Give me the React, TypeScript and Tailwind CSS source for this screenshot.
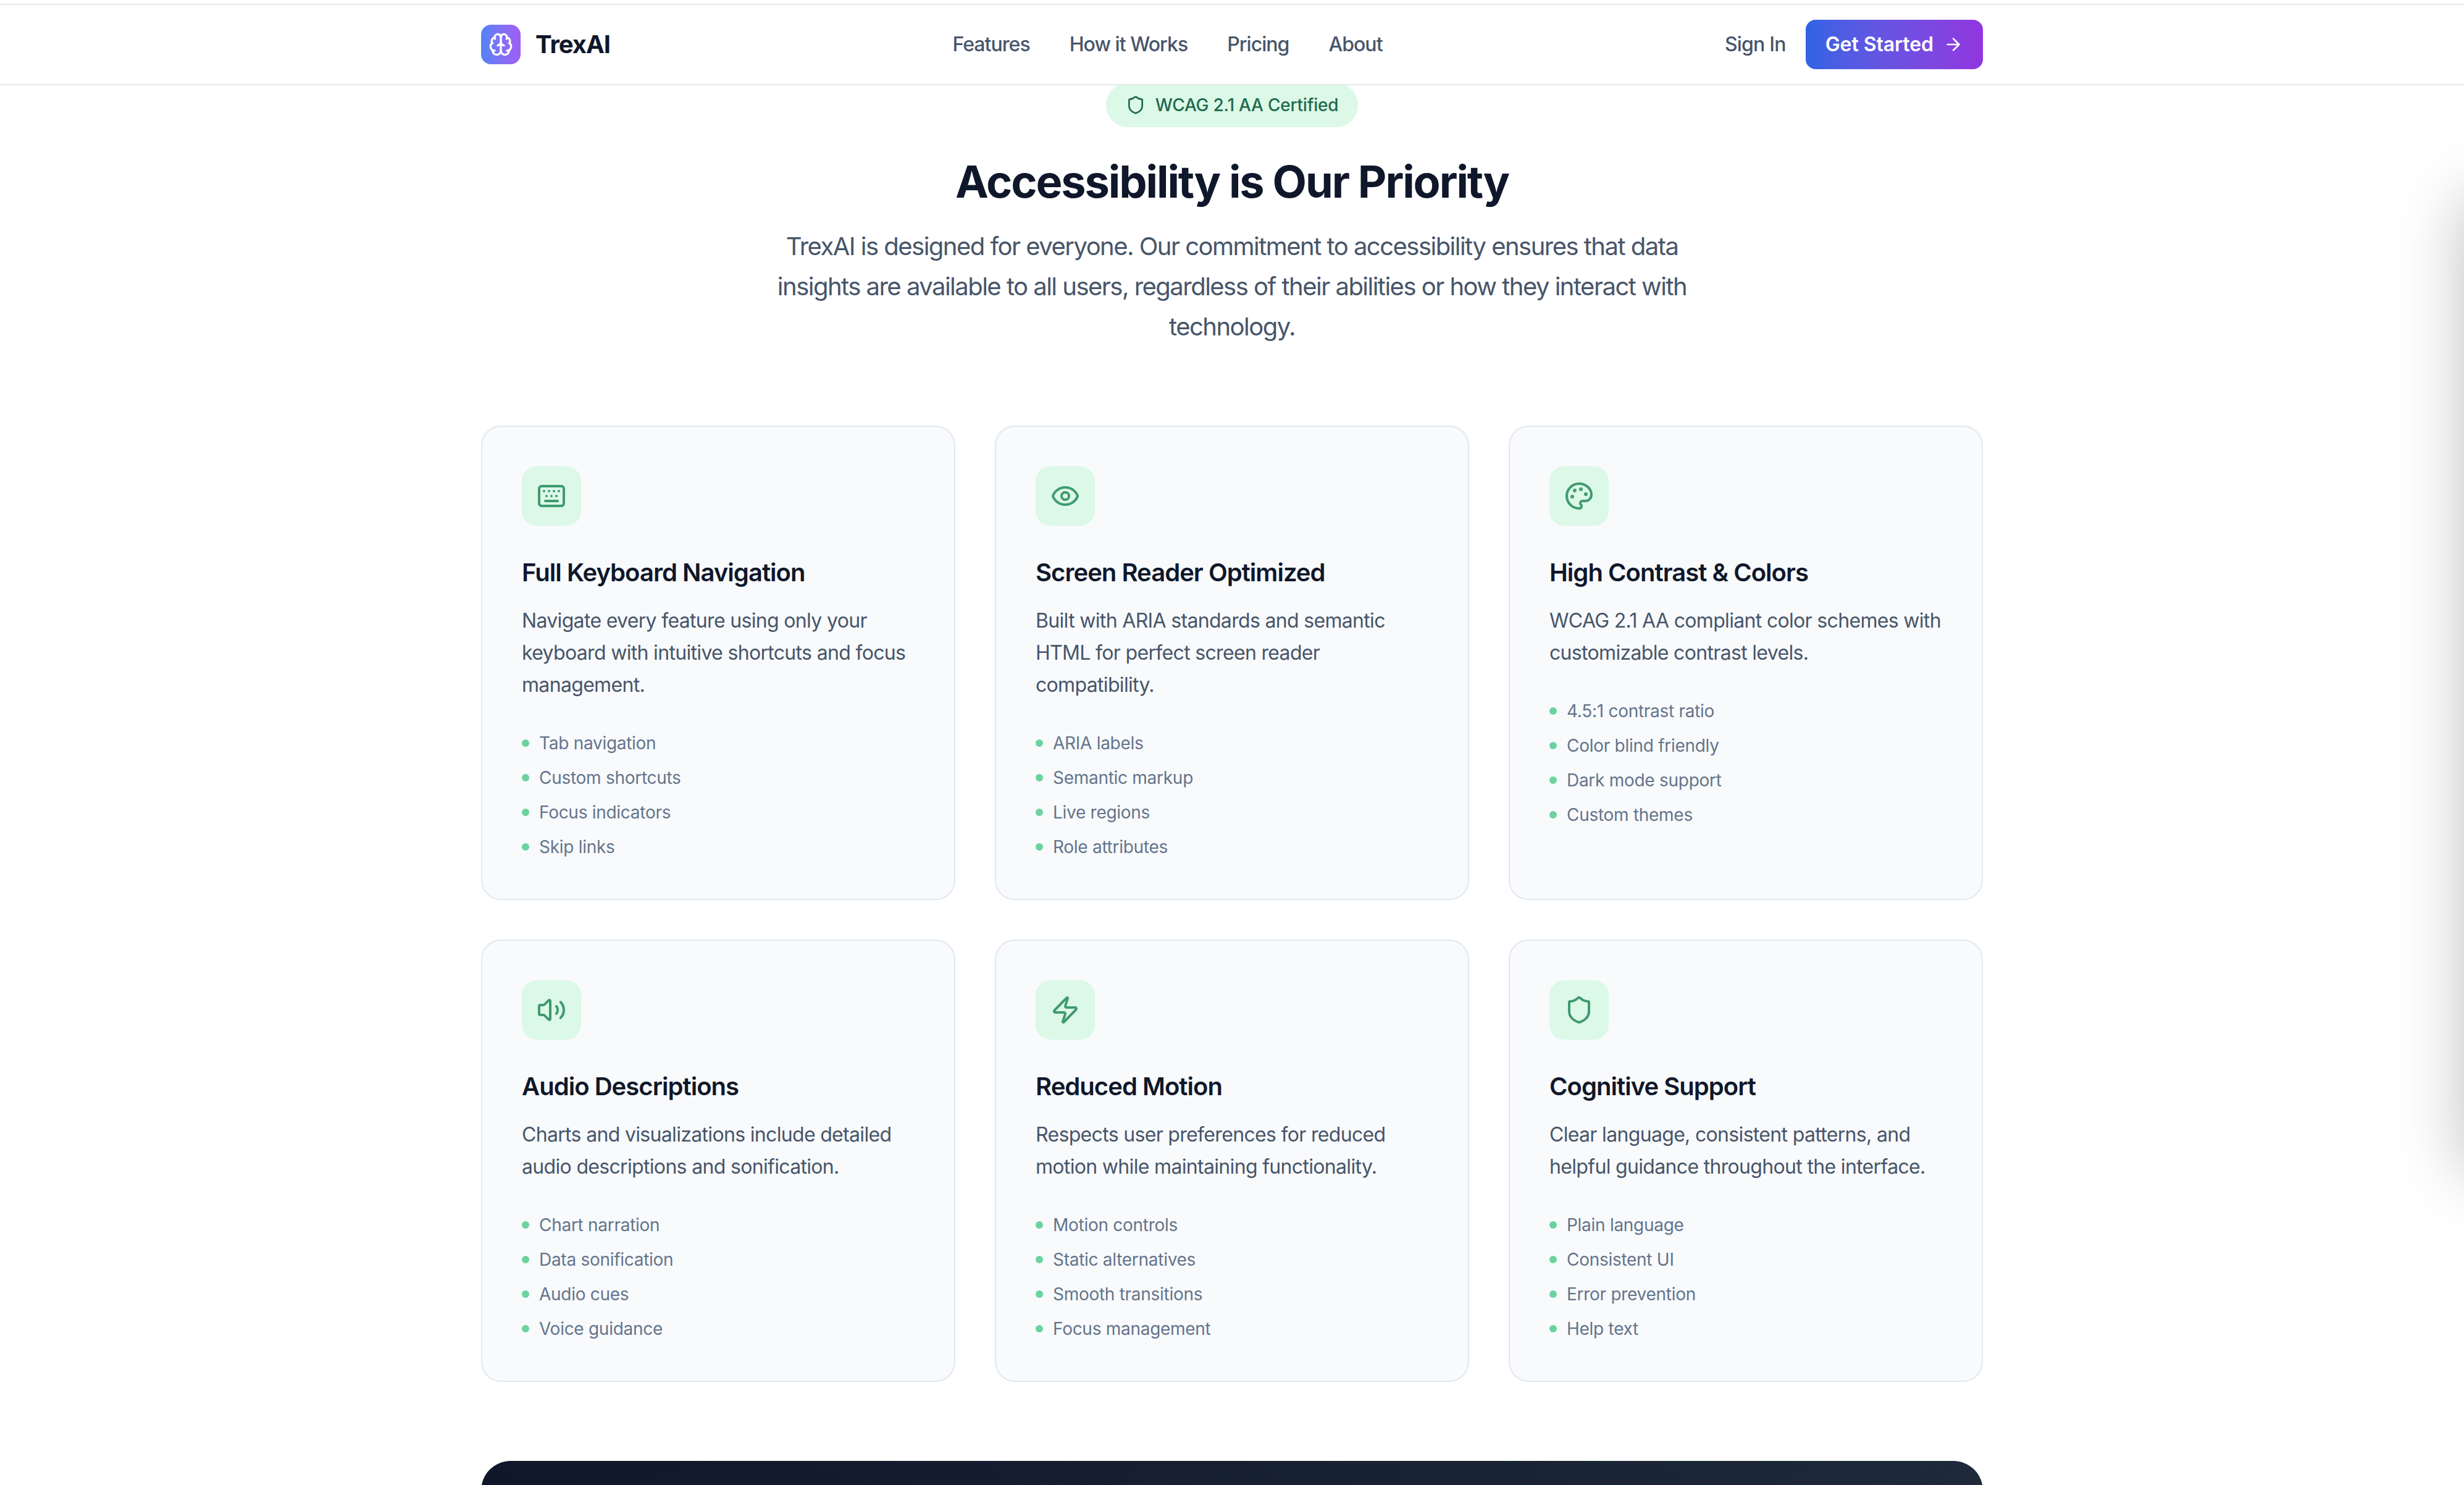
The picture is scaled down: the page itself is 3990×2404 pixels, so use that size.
import React from 'react';
import { ArrowRight, Brain, Eye, Keyboard, Palette, Shield, Volume2, Zap } from 'lucide-react';

const cards = [
  {
    icon: Keyboard,
    title: 'Full Keyboard Navigation',
    text: 'Navigate every feature using only your keyboard with intuitive shortcuts and focus management.',
    items: ['Tab navigation', 'Custom shortcuts', 'Focus indicators', 'Skip links'],
  },
  {
    icon: Eye,
    title: 'Screen Reader Optimized',
    text: 'Built with ARIA standards and semantic HTML for perfect screen reader compatibility.',
    items: ['ARIA labels', 'Semantic markup', 'Live regions', 'Role attributes'],
  },
  {
    icon: Palette,
    title: 'High Contrast & Colors',
    text: 'WCAG 2.1 AA compliant color schemes with customizable contrast levels.',
    items: ['4.5:1 contrast ratio', 'Color blind friendly', 'Dark mode support', 'Custom themes'],
  },
  {
    icon: Volume2,
    title: 'Audio Descriptions',
    text: 'Charts and visualizations include detailed audio descriptions and sonification.',
    items: ['Chart narration', 'Data sonification', 'Audio cues', 'Voice guidance'],
  },
  {
    icon: Zap,
    title: 'Reduced Motion',
    text: 'Respects user preferences for reduced motion while maintaining functionality.',
    items: ['Motion controls', 'Static alternatives', 'Smooth transitions', 'Focus management'],
  },
  {
    icon: Shield,
    title: 'Cognitive Support',
    text: 'Clear language, consistent patterns, and helpful guidance throughout the interface.',
    items: ['Plain language', 'Consistent UI', 'Error prevention', 'Help text'],
  },
];

const navLinks = ['Features', 'How it Works', 'Pricing', 'About'];

const Navbar = () => (
  <div className="relative z-10 bg-white pt-[6px]">
    <div className="h-[2px] bg-[#e5e7eb]" />
    <nav className="border-b-2 border-[#e5e7eb] bg-white">
      <div className="mx-auto flex h-[128px] w-[2432px] items-center justify-between">
        <div className="flex items-center gap-[24px]">
          <div className="flex h-[64px] w-[64px] items-center justify-center rounded-[16px] bg-gradient-to-r from-[#4f83f7] to-[#a05cf3] text-white">
            <Brain size={40} />
          </div>
          <span className="text-[40px] font-bold tracking-tight text-[#0f172a]">TrexAI</span>
        </div>
        <div className="flex items-center gap-[64px]">
          {navLinks.map((link) => (
            <a key={link} className="text-[32px] font-medium tracking-[-0.03em] text-[#475569]">
              {link}
            </a>
          ))}
        </div>
        <div className="flex items-center gap-[32px]">
          <a className="text-[32px] font-medium tracking-[-0.025em] text-[#475569]">Sign In</a>
          <button className="flex h-[80px] items-center gap-[16px] rounded-[16px] bg-gradient-to-r from-[#2f63e4] to-[#9135e0] px-[32px] text-[32px] font-semibold tracking-[-0.002em] text-white">
            Get Started
            <ArrowRight size={32} />
          </button>
        </div>
      </div>
    </nav>
  </div>
);

const Card = ({ card }: { card: (typeof cards)[number] }) => {
  const Icon = card.icon;
  return (
    <div className="rounded-[32px] border-2 border-[#e2e8f0] bg-[#f8fafc] p-[64px]">
      <div className="mb-[48px] flex h-[96px] w-[96px] items-center justify-center rounded-[24px] bg-[#dcf8e7] text-[#3f9a6f]">
        <Icon size={48} />
      </div>
      <h3 className="mb-[24px] text-[40px] leading-[56px] font-semibold tracking-[-0.024em] text-[#0f172a]">{card.title}</h3>
      <p className="mb-[48px] text-[32px] leading-[52px] tracking-[-0.021em] text-[#475569]">{card.text}</p>
      <ul className="flex flex-col gap-[16px]">
        {card.items.map((item) => (
          <li key={item} className="flex items-center gap-[16px] text-[28px] leading-[40px] tracking-[-0.01em] text-[#64748b]">
            <span className="h-[12px] w-[12px] rounded-full bg-[#6ad39f]" />
            {item}
          </li>
        ))}
      </ul>
    </div>
  );
};

export default function App() {
  return (
    <div className="relative h-[2404px] overflow-hidden bg-white font-['Inter',sans-serif]">
      <Navbar />
      <main className="mx-auto -mt-[4px] w-[2432px]">
        <div className="mb-[128px] flex flex-col items-center text-center">
          <div className="mb-[48px] flex h-[72px] items-center gap-[16px] rounded-full bg-[#dcf8e7] px-[32px] text-[28px] font-medium tracking-[-0.008em] text-[#1f6a4c]">
            <Shield size={32} />
            WCAG 2.1 AA Certified
          </div>
          <h2 className="mb-[32px] text-[72px] leading-[80px] font-bold tracking-[-0.029em] text-[#0f172a]">Accessibility is Our Priority</h2>
          <p className="w-[1536px] text-[40px] leading-[65px] tracking-[-0.038em] text-[#475569]">
            TrexAI is designed for everyone. Our commitment to accessibility ensures that data insights are available to all users, regardless of their abilities or how they interact with technology.
          </p>
        </div>
        <div className="grid grid-cols-3 gap-[64px]">
          {cards.map((card) => (
            <Card key={card.title} card={card} />
          ))}
        </div>
        <div className="mt-[128px] h-[400px] rounded-[48px] bg-gradient-to-r from-[#0f172a] to-[#1e293b]" />
      </main>
      {/* off-canvas drawer, only its shadow shows */}
      <div className="absolute top-[270px] left-[3990px] h-[1577px] w-[800px] bg-white shadow-[0_50px_100px_0_rgba(0,0,0,0.25)]" />
    </div>
  );
}
